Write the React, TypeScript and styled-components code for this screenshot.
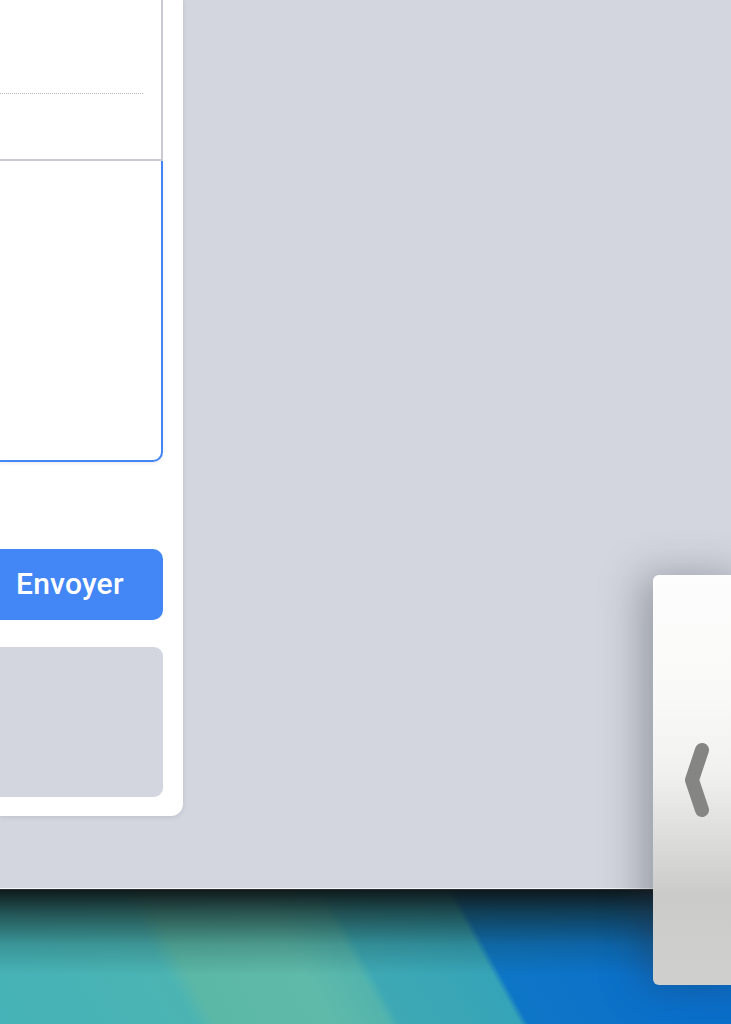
import styled, { createGlobalStyle } from "styled-components";

const GlobalStyle = createGlobalStyle`
	html, body {
		margin: 0;
		padding: 0;
		overflow: hidden;
		background: #d3d6de;
		font-family: Roboto, "Noto Sans", "Liberation Sans", sans-serif;
	}
`;

const Screen = styled.div`
	position: relative;
	display: flex;
	flex-direction: column;
	width: 731px;
	height: 1024px;
	overflow: hidden;
`;

const Workspace = styled.div`
	display: flex;
	align-items: flex-start;
	height: 888px;
	flex-shrink: 0;
	background: #d3d6de;
	border-bottom: 1px solid #f4f5f8;
`;

const Card = styled.div`
	display: flex;
	flex-direction: column;
	box-sizing: border-box;
	width: 183px;
	height: 816px;
	padding: 0 20px 19px 0;
	background: #ffffff;
	border-radius: 0 0 12px 0;
	box-shadow: 0 1px 4px rgba(120, 125, 140, 0.25);
`;

const Header = styled.div`
	box-sizing: border-box;
	height: 161px;
	flex-shrink: 0;
	padding-top: 93px;
	border-right: 2px solid #c8c9d2;
	border-bottom: 2px solid #c8c9d2;
`;

const DottedRule = styled.div`
	width: 143px;
	border-top: 1px dotted #b8b8be;
`;

const Editor = styled.div`
	box-sizing: border-box;
	height: 301px;
	flex-shrink: 0;
	border: 2px solid #4285f4;
	border-top: none;
	border-left: none;
	border-radius: 0 0 10px 0;
	box-shadow: 0 2px 3px rgba(0, 0, 0, 0.06);
`;

const SendButton = styled.button`
	display: flex;
	align-items: center;
	height: 71px;
	margin-top: 87px;
	flex-shrink: 0;
	padding: 0 0 2px 16px;
	border: none;
	border-radius: 0 10px 10px 0;
	background: #4287f5;
	color: #ffffff;
	font-family: Roboto, "Noto Sans", sans-serif;
	font-size: 30px;
	font-weight: 500;
	letter-spacing: 0.2px;
	cursor: pointer;
`;

const Preview = styled.div`
	height: 150px;
	margin-top: 27px;
	flex-shrink: 0;
	background: #d3d6de;
	border-radius: 0 9px 9px 0;
`;

const Wallpaper = styled.div`
	flex: 1;
	border-top: 1px solid #2b2e2e;
	background:
		linear-gradient(
			to bottom,
			rgba(14, 22, 24, 0.97) 0px,
			rgba(18, 40, 40, 0.7) 22px,
			rgba(20, 60, 60, 0.25) 55px,
			rgba(20, 60, 60, 0) 85px
		),
		linear-gradient(
			61deg,
			#46b3b8 0px,
			#4bb4b3 170px,
			#5cb8a6 190px,
			#5fbaa9 290px,
			#53b4ad 340px,
			#3ea9b4 350px,
			#36a4b8 455px,
			#0e76c6 462px,
			#0a70cb 600px,
			#0a6dca 704px
		);
`;

const DrawerHandle = styled.div`
	position: absolute;
	left: 653px;
	top: 575px;
	width: 100px;
	height: 410px;
	display: flex;
	align-items: center;
	padding-left: 32px;
	box-sizing: border-box;
	border-radius: 6px 0 0 6px;
	background: linear-gradient(
		to bottom,
		#fdfdfd 0%,
		#f9f9f8 30%,
		#f1f1f0 48%,
		#dfdfdd 62%,
		#cbcbc9 78%,
		#d0d0ce 100%
	);
	box-shadow: -12px 0 40px rgba(40, 45, 60, 0.35);
`;

const Chevron = () => (
	<svg width="26" height="80" viewBox="0 0 26 80">
		<path
			d="M17 10 L7 40 L17 70"
			fill="none"
			stroke="#858583"
			strokeWidth="14"
			strokeLinecap="round"
			strokeLinejoin="round"
		/>
	</svg>
);

export default function App() {
	return (
		<Screen>
			<GlobalStyle />
			<Workspace>
				<Card>
					<Header>
						<DottedRule />
					</Header>
					<Editor />
					<SendButton>Envoyer</SendButton>
					<Preview />
				</Card>
			</Workspace>
			<Wallpaper />
			<DrawerHandle>
				<Chevron />
			</DrawerHandle>
		</Screen>
	);
}
